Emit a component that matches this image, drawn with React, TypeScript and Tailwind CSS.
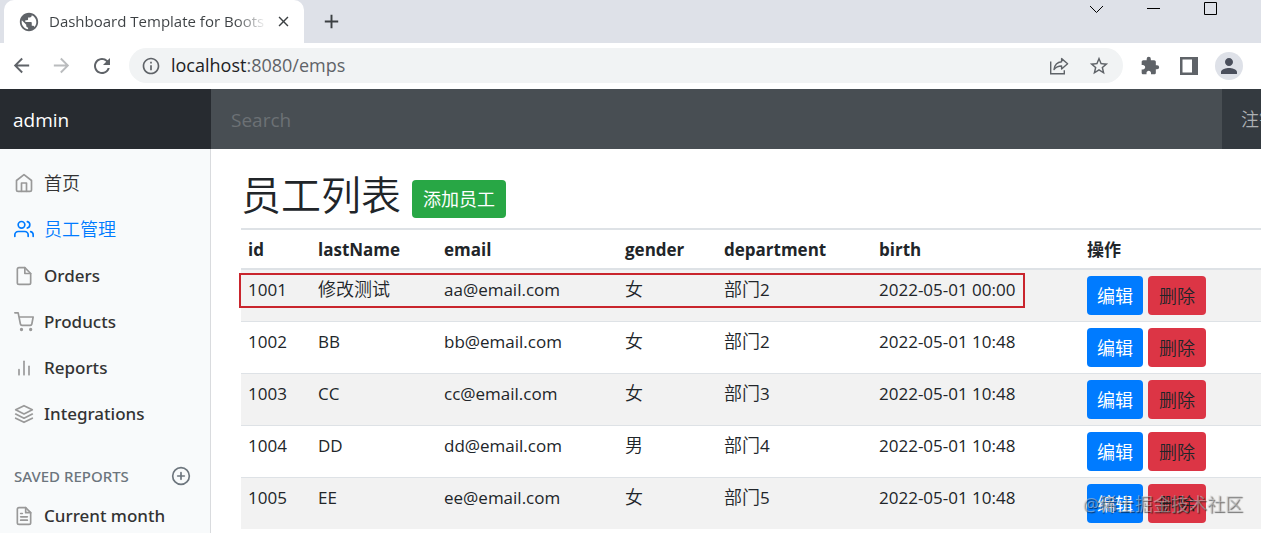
import React from "react";
import type { IconType } from "react-icons";
import {
  FiHome, FiUsers, FiFile, FiShoppingCart, FiBarChart2, FiLayers, FiPlusCircle, FiFileText,
} from "react-icons/fi";
import {
  MdArrowBack, MdArrowForward, MdRefresh, MdInfoOutline, MdStarBorder, MdExtension, MdPerson, MdPublic, MdClose, MdAdd,
} from "react-icons/md";

type Employee = { id: number; lastName: string; email: string; gender: string; department: string; birth: string };

const employees: Employee[] = [
  { id: 1001, lastName: "修改测试", email: "aa@email.com", gender: "女", department: "部门2", birth: "2022-05-01 00:00" },
  { id: 1002, lastName: "BB", email: "bb@email.com", gender: "女", department: "部门2", birth: "2022-05-01 10:48" },
  { id: 1003, lastName: "CC", email: "cc@email.com", gender: "女", department: "部门3", birth: "2022-05-01 10:48" },
  { id: 1004, lastName: "DD", email: "dd@email.com", gender: "男", department: "部门4", birth: "2022-05-01 10:48" },
  { id: 1005, lastName: "EE", email: "ee@email.com", gender: "女", department: "部门5", birth: "2022-05-01 10:48" },
];

const links: { label: string; icon: IconType; cjk?: boolean; active?: boolean }[] = [
  { label: "首页", icon: FiHome, cjk: true },
  { label: "员工管理", icon: FiUsers, cjk: true, active: true },
  { label: "Orders", icon: FiFile },
  { label: "Products", icon: FiShoppingCart },
  { label: "Reports", icon: FiBarChart2 },
  { label: "Integrations", icon: FiLayers },
];

const cjk = "text-[18px] font-[350]";

function ShareIcon() {
  return (
    <svg width="20" height="20" viewBox="0 0 20 20" fill="none" stroke="currentColor" strokeWidth="1.4">
      <path d="M1.7 5.5v12.3h13.6v-3.6" />
      <path d="M12.6 2.6v3.2C8 6.200 5.600 9 5 13.600c2-2.600 4.300-3.600 7.600-3.600v3.100l6-5.300z" strokeLinejoin="round" />
    </svg>
  );
}

function BrowserChrome() {
  return (
    <header className="shrink-0">
      <div className="flex h-[43px] items-end justify-between bg-[#dee1e8]">
        <div className="flex h-full items-center">
          <div className="ml-1 flex h-full w-[300px] items-center rounded-t-[10px] bg-white pl-[14px] text-[#3c4043]">
            <MdPublic size={22} className="mr-[9px] shrink-0 text-[#5f6368]" />
            <span className="flex-1 overflow-hidden bg-linear-to-r from-[#3c4043] from-85% to-transparent bg-clip-text text-[15px] whitespace-nowrap text-transparent">
              Dashboard Template for Boots
            </span>
            <button aria-label="Close tab" className="mr-3 ml-2"><MdClose size={17} /></button>
          </div>
          <button aria-label="New tab" className="ml-4 text-[#3c4043]"><MdAdd size={23} /></button>
        </div>
        <div className="flex items-center gap-[42px] self-start pt-[1px] pr-[43px] text-black">
          <button aria-label="Search tabs">
            <svg width="15" height="15" viewBox="0 0 15 15" fill="none" stroke="currentColor"><path d="M1 5l6.500 6.500L14 5" /></svg>
          </button>
          <button aria-label="Minimize">
            <svg width="15" height="15" viewBox="0 0 15 15" stroke="currentColor"><path d="M1 7.500h13" /></svg>
          </button>
          <button aria-label="Maximize">
            <svg width="15" height="15" viewBox="0 0 15 15" fill="none" stroke="currentColor"><path d="M1.500 1.500h12v12h-12z" /></svg>
          </button>
        </div>
      </div>
      <div className="flex h-[46px] items-center bg-white pr-[18px] pb-px pl-[10px] text-[#5f6368]">
        <button aria-label="Back"><MdArrowBack size={23} /></button>
        <button aria-label="Forward" className="ml-[17px] text-[#babcbe]"><MdArrowForward size={23} /></button>
        <button aria-label="Reload" className="ml-[17px]"><MdRefresh size={24} /></button>
        <div className="ml-[15px] flex h-[35px] flex-1 items-center rounded-full bg-[#f1f3f4] pr-[13px] pl-3">
          <MdInfoOutline size={20} />
          <p className="ml-[10px] flex-1 text-[18px]"><span className="text-[#202124]">localhost</span>:8080/emps</p>
          <button aria-label="Share"><ShareIcon /></button>
          <button aria-label="Bookmark" className="ml-[19px]"><MdStarBorder size={22} /></button>
        </div>
        <button aria-label="Extensions" className="ml-[17px]"><MdExtension size={20} /></button>
        <button aria-label="Side panel" className="ml-5">
          <svg width="18" height="18" viewBox="0 0 18 18" fill="currentColor"><path fillRule="evenodd" d="M0 0h18v18H0zM2.500 2.500v13h9.500v-13z" /></svg>
        </button>
        <button aria-label="Profile" className="ml-[17px] flex h-7 w-7 items-center justify-center rounded-full bg-[#dee1e8] text-[#4a4f5c]">
          <MdPerson size={24} />
        </button>
      </div>
    </header>
  );
}

function Sidebar() {
  return (
    <nav className="w-[211px] shrink-0 overflow-hidden border-r border-[#d9dbde] bg-[#f8fafb] pt-3 font-['Noto_Sans','Noto_Sans_CJK_SC',sans-serif]">
      <ul>
        {links.map(({ label, icon: Icon, cjk: isCjk, active }) => (
          <li key={label}>
            <a href="#" className={`flex h-[46px] items-center gap-[10px] pl-[14px] ${isCjk ? "pb-0.5" : ""} ${active ? "text-[#007bff]" : "text-[#333333]"}`}>
              <Icon size={20} className={active ? "" : "text-[#999999]"} />
              <span className={isCjk ? cjk : "text-[17px] font-medium"}>{label}</span>
            </a>
          </li>
        ))}
      </ul>
      <div className="mt-[22px] flex h-[34px] items-center justify-between pr-[19px] pl-[14px] text-[#6c757d]">
        <h2 className="text-[15px] font-medium">SAVED REPORTS</h2>
        <button aria-label="Add a new report"><FiPlusCircle size={20} /></button>
      </div>
      <a href="#" className="flex h-[46px] items-center gap-[10px] pl-[14px] text-[#333333]">
        <FiFileText size={20} className="text-[#999999]" />
        <span className="text-[17px] font-medium">Current month</span>
      </a>
    </nav>
  );
}

function EmployeeTable() {
  return (
    <div className="relative mt-[10px]">
      <table className="w-full table-fixed border-separate border-spacing-0 text-left text-[17px] leading-[27px] text-[#212529]">
        <colgroup>
          <col className="w-[70px]" />
          <col className="w-[126px]" />
          <col className="w-[181px]" />
          <col className="w-[99px]" />
          <col className="w-[155px]" />
          <col className="w-[208px]" />
          <col />
        </colgroup>
        <thead>
          <tr className="h-[42px]">
            {["id", "lastName", "email", "gender", "department", "birth", "操作"].map((h) => (
              <th key={h} className="border-y-2 border-[#dee2e6] px-[7px] font-bold">{h}</th>
            ))}
          </tr>
        </thead>
        <tbody className="[&_td]:border-[#dee2e6] [&_td]:px-[7px] [&_td]:pt-[6px] [&_td]:align-top [&_tr:not(:last-child)_td]:border-b">
          {employees.map((e) => (
            <tr key={e.id} className="h-[52px] last:h-[51px] odd:bg-[#f2f2f2]">
              <td>{e.id}</td>
              <td className={e.id === 1001 ? cjk : ""}>{e.lastName}</td>
              <td>{e.email}</td>
              <td className={cjk}>{e.gender}</td>
              <td>
                <span className={cjk}>{e.department.slice(0, 2)}</span>
                {e.department.slice(2)}
              </td>
              <td>{e.birth}</td>
              <td>
                <div className="flex gap-[5px] text-[18px]">
                  <button className="h-[39px] rounded-[4px] bg-[#007bff] px-[10px] pt-0.5 text-white">编辑</button>
                  <button className="h-[39px] rounded-[4px] bg-[#dc3545] px-[11px] pt-0.5 font-[350] text-[#212529]">删除</button>
                </div>
              </td>
            </tr>
          ))}
        </tbody>
      </table>
      <div className="pointer-events-none absolute top-[45px] -left-0.5 h-[35px] w-[786px] border-2 border-[#c9252d]" />
    </div>
  );
}

export default function App() {
  return (
    <div className="relative flex h-screen flex-col overflow-hidden bg-white font-['Open_Sans','Noto_Sans_CJK_SC',sans-serif]">
      <BrowserChrome />
      <div className="flex h-[60px] shrink-0 bg-[#343a40]">
        <a href="#" className="flex w-[211px] shrink-0 items-center bg-[#272b30] pt-0.5 pl-[13px] text-[19px] text-white">admin</a>
        <input
          type="text"
          aria-label="Search"
          placeholder="Search"
          className="min-w-0 flex-1 bg-[#484e53] px-5 pt-0.5 text-[19px] text-white outline-none placeholder:text-[#6c7175]"
        />
        <a href="#" className="flex w-[39px] shrink-0 items-center overflow-hidden pl-[19px] text-[18px] font-[350] whitespace-nowrap text-[#adb0b3]">注销</a>
      </div>
      <div className="flex min-h-0 flex-1">
        <Sidebar />
        <main className="min-w-0 flex-1 overflow-hidden pl-[30px]">
          <div className="flex items-end gap-[11px] pt-[23px]">
            <h1 className="text-[40px] leading-[46px] font-[350] text-[#212529]">员工列表</h1>
            <button className="h-[38px] rounded-[4px] bg-[#28a745] px-[11px] text-[18px] text-white">添加员工</button>
          </div>
          <EmployeeTable />
        </main>
      </div>
      <p className="pointer-events-none absolute right-[18px] bottom-[15px] text-[18px] text-[#d0d0d0]/50 [text-shadow:1px_1px_1px_rgba(0,0,0,0.55)]">@稀土掘金技术社区</p>
    </div>
  );
}
